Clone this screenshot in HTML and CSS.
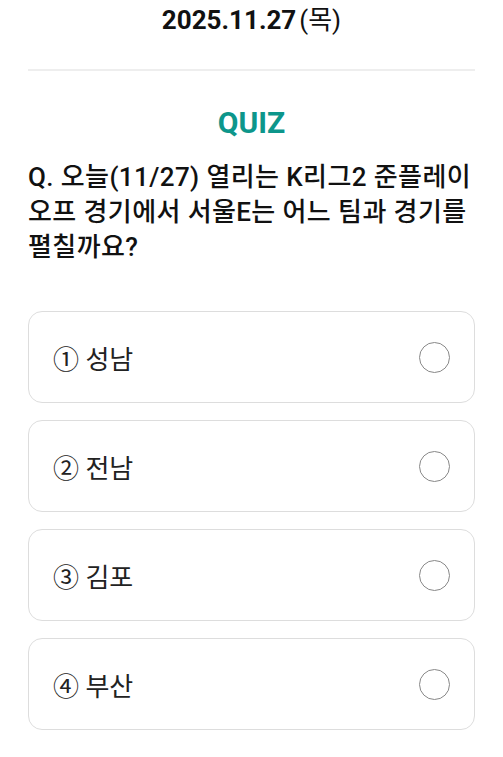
FILE: index.html
```html
<!DOCTYPE html>
<html lang="ko">
<head>
	<meta charset="UTF-8">
	<title>QUIZ</title>
	<link rel="stylesheet" href="styles.css">
</head>
<body>
	<div class="page">
		<div class="date"><b>2025.11.27</b><span class="day">(목)</span></div>
		<div class="quiz">
			<h2 class="quiz-title">QUIZ</h2>
			<p class="question">Q. 오늘(11/27) 열리는 K리그2 준플레이오프 경기에서 서울E는 어느 팀과 경기를 펼칠까요?</p>
			<ul class="options">
				<li class="option"><span class="label">① 성남</span><span class="radio"></span></li>
				<li class="option"><span class="label">② 전남</span><span class="radio"></span></li>
				<li class="option"><span class="label">③ 김포</span><span class="radio"></span></li>
				<li class="option"><span class="label">④ 부산</span><span class="radio"></span></li>
			</ul>
		</div>
	</div>
</body>
</html>
```

FILE: styles.css
```css
* {
	padding: 0; margin: 0;
	box-sizing: border-box;
}
body {
	background: #fff;
	color: #111;
	font-family: Roboto, "Noto Sans CJK KR", sans-serif;
}
.page {
	padding: 0 28px;
}
.date {
	height: 71px;
	padding-top: 2px;
	text-align: center;
	font-size: 26px;
	line-height: 36px;
	border-bottom: 2px solid #eee;
}
.date b {
	font-weight: 700;
}
.day {
	margin-left: 3px;
	font-weight: 400;
}
.quiz-title {
	margin-top: 34px;
	text-align: center;
	font-size: 30px;
	line-height: 36px;
	font-weight: 700;
	color: #0d968b;
}
.question {
	margin-top: 19px;
	font-size: 26px;
	line-height: 35px;
	letter-spacing: 0.4px;
	font-weight: 500;
	color: #111;
}
.options {
	list-style: none;
	margin-top: 46px;
	display: flex;
	flex-direction: column;
	gap: 17px;
}
.option {
	height: 92px;
	padding: 0 24px;
	display: flex;
	align-items: center;
	justify-content: space-between;
	border: 1px solid #ddd;
	border-radius: 14px;
}
.label {
	font-size: 26px;
	font-weight: 400;
	color: #222;
}
.radio {
	width: 31px;
	height: 31px;
	border: 1.5px solid #888;
	border-radius: 50%;
}
```
